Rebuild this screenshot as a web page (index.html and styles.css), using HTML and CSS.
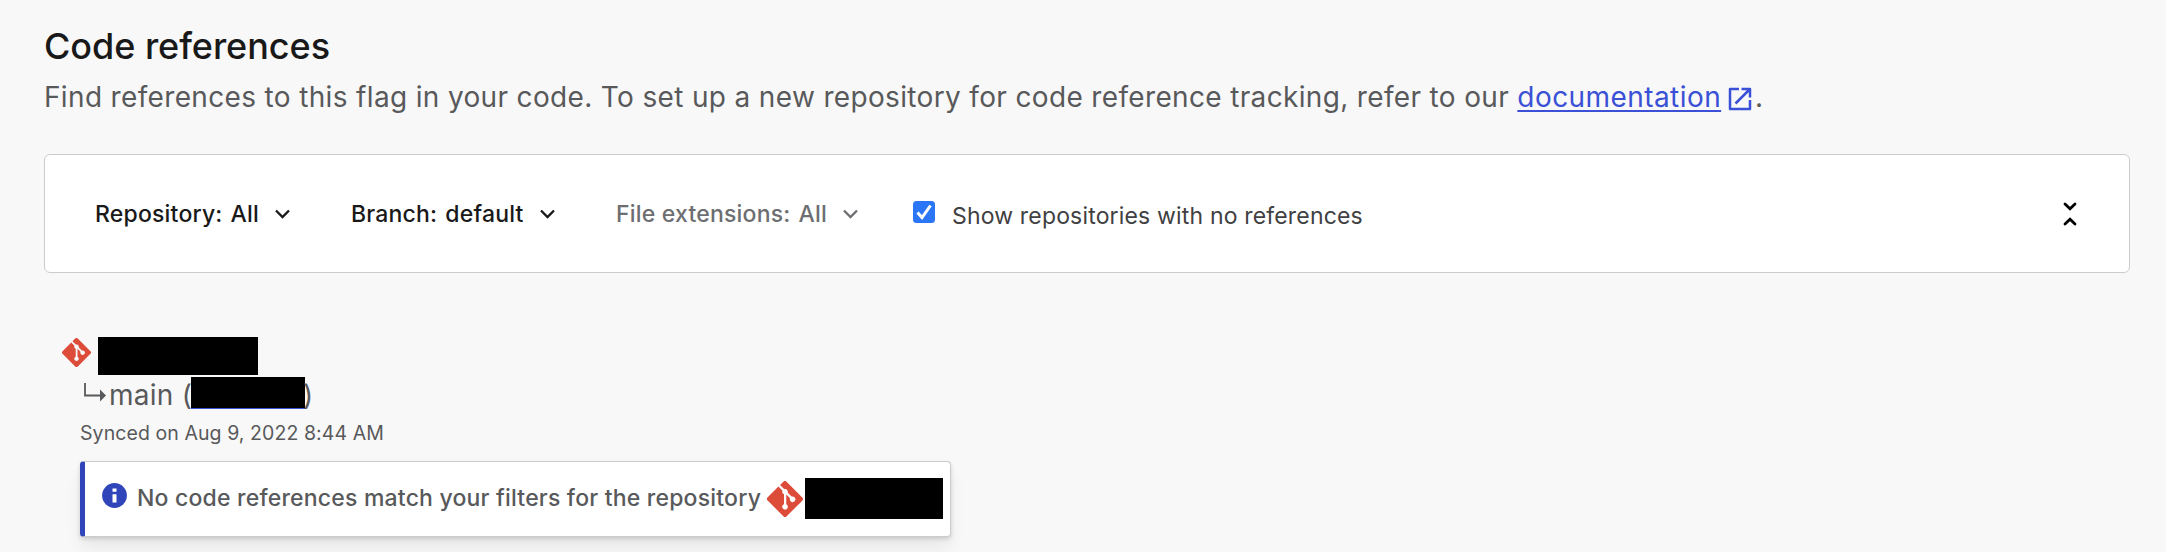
FILE: index.html
```html
<!DOCTYPE html>
<html lang="en">
<head>
<meta charset="utf-8">
<title>Code references</title>
<link rel="stylesheet" href="styles.css">
</head>
<body>
<svg class="defs" aria-hidden="true">
  <symbol id="git" viewBox="0 0 92 92"><path fill="#dd4c39" d="M90.156 41.965 50.036 1.848a5.918 5.918 0 0 0-8.372 0l-8.328 8.332 10.566 10.566a7.03 7.03 0 0 1 7.23 1.684 7.034 7.034 0 0 1 1.669 7.277l10.187 10.184a7.028 7.028 0 0 1 7.278 1.672 7.04 7.04 0 0 1 0 9.957 7.05 7.05 0 0 1-9.965 0 7.044 7.044 0 0 1-1.528-7.66l-9.5-9.497V59.36a7.04 7.04 0 0 1 1.860 11.290 7.04 7.04 0 0 1-9.957 0 7.04 7.04 0 0 1 0-9.958 7.06 7.06 0 0 1 2.304-1.539V33.926a7.049 7.049 0 0 1-3.820-9.234L29.242 14.272 1.730 41.777a5.925 5.925 0 0 0 0 8.371L41.852 90.270a5.925 5.925 0 0 0 8.370 0l39.934-39.934a5.925 5.925 0 0 0 0-8.371"/></symbol>
  <symbol id="chevron" viewBox="0 0 15 10"><path d="M1 1.500 7.500 8 14 1.500" fill="none" stroke="currentColor" stroke-width="2.300"/></symbol>
</svg>
<main class="page">
  <h1 class="title">Code references</h1>
  <p class="intro">Find references to this flag in your code. To set up a new repository for code reference tracking, refer to our <a class="link" href="#">documentation</a><svg class="external" viewBox="0 0 24 24"><path d="M11 2H2v20h20v-9M13.500 2H22v8.500M22 2 7.500 16.500" fill="none" stroke="currentColor" stroke-width="2.500" stroke-linejoin="round"/></svg>.</p>
  <section class="filters">
    <div class="filter repo"><span>Repository:</span><span>All</span><svg class="chev"><use href="#chevron"/></svg></div>
    <div class="filter branch"><span>Branch:</span><span>default</span><svg class="chev"><use href="#chevron"/></svg></div>
    <div class="filter ext"><span>File extensions:</span><span>All</span><svg class="chev"><use href="#chevron"/></svg></div>
    <div class="check"><svg class="box" viewBox="0 0 22 22"><rect width="22" height="22" rx="3.500" fill="#2b76f6"/><path d="m4.500 11.500 4.500 5 8.500-12" fill="none" stroke="#fff" stroke-width="3"/></svg><span class="check-label">Show repositories with no references</span></div>
    <svg class="collapse" viewBox="0 0 14 24"><path d="m2 2 5 4.800L12 2M2 22l5-4.800 5 4.800" fill="none" stroke="#000" stroke-width="2.800" stroke-linecap="round"/></svg>
  </section>
  <section class="repository">
    <div class="repo-head"><svg class="git-small"><use href="#git"/></svg><span class="mask name"></span></div>
    <div class="branch-line"><svg class="arrow" viewBox="0 0 24 20"><path d="M2 0v12.500h16" fill="none" stroke="currentColor" stroke-width="1.800"/><path d="m17 6.500 6 6-6 6z" fill="currentColor"/></svg><span class="branch-name">main (</span><span class="mask commit"></span><span class="close">)</span></div>
    <div class="synced">Synced on Aug 9, 2022 8:44 AM</div>
    <div class="notice">
      <svg class="info" viewBox="0 0 25 25"><circle cx="12.500" cy="12.500" r="12.400" fill="#3045b9"/><path d="M10.500 5.500h4v3.200h-4zM10.500 11.200h4v8.200h-4z" fill="#fff"/></svg>
      <span class="notice-text">No code references match your filters for the repository</span>
      <svg class="git-large"><use href="#git"/></svg><span class="mask target"></span>
    </div>
  </section>
</main>
</body>
</html>
```
FILE: styles.css
```css
* { box-sizing: border-box; }
body { margin: 0; background: #f8f8f8; color: #58595b; font-family: Inter, sans-serif; height: 552px; overflow: hidden; }
svg { flex: none; display: block; }
.defs { position: absolute; width: 0; height: 0; }
.page { padding: 24px 36px 0 44px; }
.title { margin: 0; height: 45px; line-height: 45px; font-size: 36px; font-weight: 500; letter-spacing: -0.05px; color: #191919; white-space: nowrap; }
.intro { margin: 7px 0 0; height: 42px; display: block; line-height: 42px; font-size: 28px; letter-spacing: 0.345px; white-space: nowrap; }
.link { letter-spacing: 0.43px; color: #3a50d6; text-decoration: underline; text-decoration-thickness: 2px; text-underline-offset: 3px; text-decoration-skip-ink: none; }
.external { display: inline-block; width: 24px; height: 24px; margin: 0 3px 0 7px; vertical-align: -4px; color: #3a50d6; }
.filters { display: flex; align-items: flex-start; height: 119px; margin-top: 36px; padding: 0 52px 0 50px; background: #fff; border: 1px solid #ccc; border-radius: 6px; }
.filter { display: flex; align-items: center; height: 30px; margin-top: 44px; line-height: 30px; gap: 8px; font-size: 23px; font-weight: 500; letter-spacing: 0.2px; color: #191919; white-space: nowrap; }
.repo { width: 256px; }
.branch { width: 265px; }
.ext { width: 297px; color: #6d6e71; }
.chev { width: 15px; height: 10px; margin-left: 8px; }
.check { display: flex; align-items: flex-start; margin-top: 46px; }
.box { width: 22px; height: 22px; }
.check-label { margin: 0 0 0 17px; line-height: 30px; font-size: 23px; letter-spacing: 0.17px; color: #414042; white-space: nowrap; }
.collapse { width: 14px; height: 24px; margin: 47px 0 0 auto; }
.repository { padding: 64px 0 0 18px; }
.repo-head { display: flex; height: 40px; }
.git-small { width: 29px; height: 29px; margin-top: 1px; }
.mask { display: block; flex: none; background: #000; }
.name { width: 160px; height: 38px; margin-left: 7px; }
.branch-line { display: flex; height: 38px; margin-left: 21px; line-height: 37px; font-size: 28px; letter-spacing: 0.28px; white-space: pre; }
.arrow { width: 24px; height: 20px; margin: 6px 2px 0 0; }
.branch-name { width: 82px; }
.commit { width: 114px; height: 32px; border-bottom: 1px solid #3a50d6; }
.close { margin-left: -2px; }
.synced { height: 30px; margin: 3px 0 0 18px; line-height: 30px; font-size: 19.5px; letter-spacing: 0.08px; }
.notice { display: flex; width: 871px; height: 76px; margin: 13px 0 0 18px; padding-left: 17px; background: #fff; border: 1px solid #ccc; border-left: 5px solid #3045b9; border-radius: 4px; box-shadow: 0 2px 4px rgba(0,0,0,.15), 0 12px 16px rgba(0,0,0,.06); }
.info { width: 25px; height: 25px; margin-top: 21px; }
.notice-text { margin: 20px 0 0 10px; width: 630px; line-height: 32px; font-size: 23px; font-weight: 500; letter-spacing: 0.2px; white-space: nowrap; }
.git-large { width: 36px; height: 36px; margin-top: 19px; }
.target { width: 138px; height: 41px; margin: 16px 0 0 2px; }
```
